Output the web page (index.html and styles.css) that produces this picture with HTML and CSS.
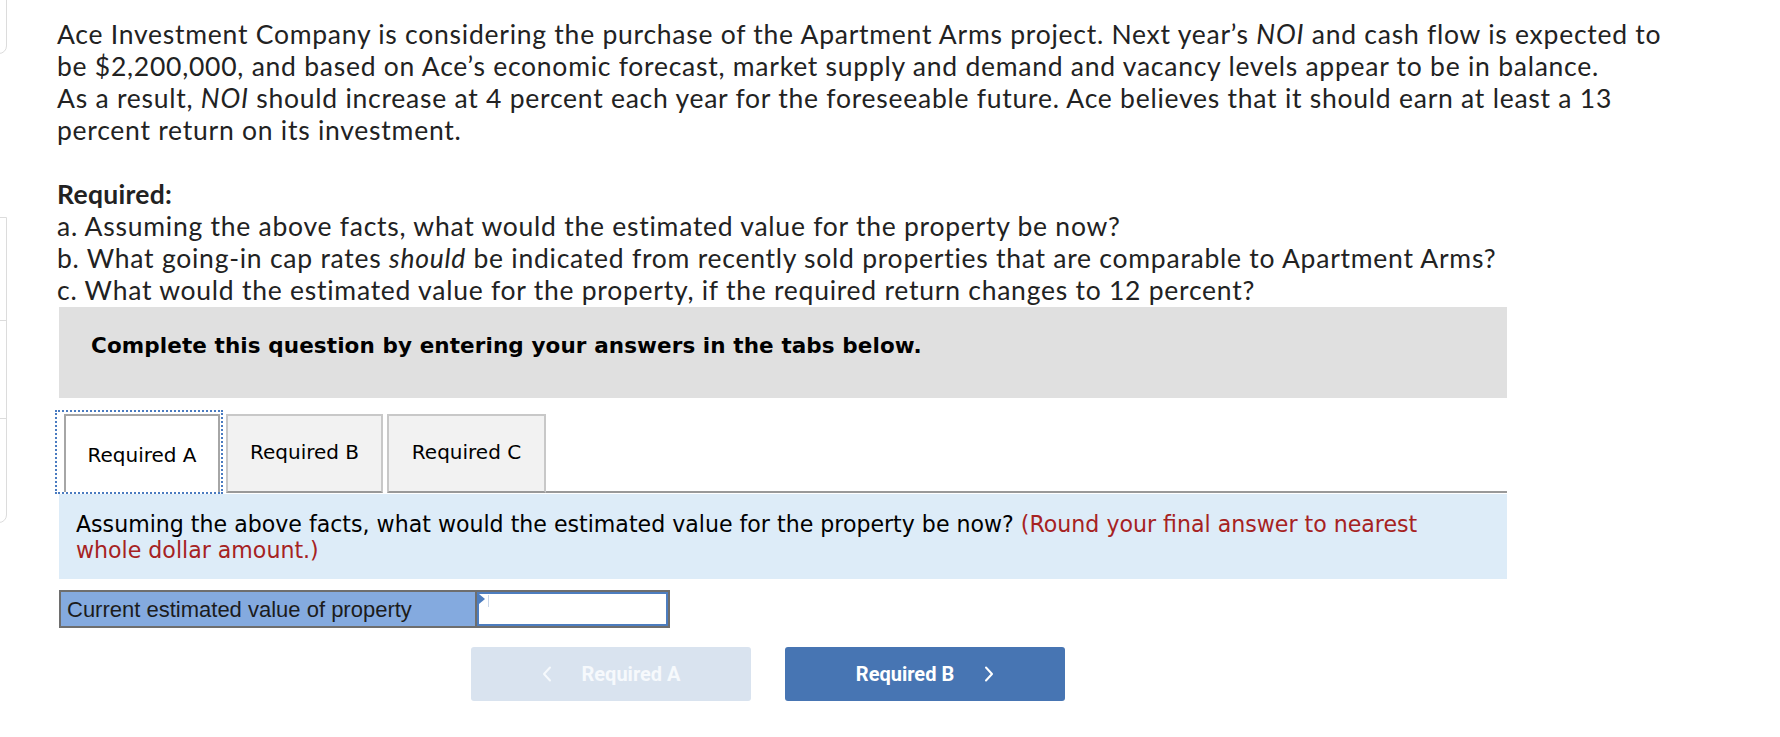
FILE: index.html
```html
<!DOCTYPE html>
<html lang="en">
<head>
<meta charset="utf-8">
<title>Apartment Arms</title>
<link rel="stylesheet" href="styles.css">
</head>
<body>
<div class="page">
  <aside class="side">
    <div class="card card-top"></div>
    <div class="card-group">
      <div class="seg seg-1"></div>
      <div class="seg seg-2"></div>
      <div class="seg seg-3"></div>
    </div>
  </aside>
  <main class="main">
    <p class="intro">Ace Investment Company is considering the purchase of the Apartment Arms project. Next year’s <i>NOI</i> and cash flow is expected to<br>be $2,200,000, and based on Ace’s economic forecast, market supply and demand and vacancy levels appear to be in balance.<br>As a result, <i>NOI</i> should increase at 4 percent each year for the foreseeable future. Ace believes that it should earn at least a 13<br>percent return on its investment.</p>
    <p class="req"><strong>Required:</strong><br>a. Assuming the above facts, what would the estimated value for the property be now?<br>b. What going-in cap rates <i>should</i> be indicated from recently sold properties that are comparable to Apartment Arms?<br>c. What would the estimated value for the property, if the required return changes to 12 percent?</p>

    <div class="instr">Complete this question by entering your answers in the tabs below.</div>

    <div class="tabs">
      <div class="tab-focus"><div class="tab tab-active">Required A</div></div>
      <div class="tab">Required B</div>
      <div class="tab tab-c">Required C</div>
      <div class="tab-fill"></div>
    </div>

    <div class="prompt">Assuming the above facts, what would the estimated value for the property be now? <span class="hint">(Round your final answer to nearest<br>whole dollar amount.)</span></div>

    <div class="answer">
      <div class="answer-label">Current estimated value of property</div>
      <div class="answer-input"><span class="marker"></span><span class="caret"></span></div>
    </div>

    <div class="nav">
      <div class="btn btn-prev">
        <svg class="chev" viewBox="0 0 10 16" width="10" height="16"><path d="M8 1.5 L2 8 L8 14.5" fill="none" stroke="currentColor" stroke-width="2" stroke-linecap="round" stroke-linejoin="round"/></svg>
        <span>Required A</span>
      </div>
      <div class="btn btn-next">
        <span>Required B</span>
        <svg class="chev" viewBox="0 0 10 16" width="10" height="16"><path d="M2 1.5 L8 8 L2 14.5" fill="none" stroke="currentColor" stroke-width="2" stroke-linecap="round" stroke-linejoin="round"/></svg>
      </div>
    </div>
  </main>
</div>
</body>
</html>
```

FILE: styles.css
```css
html, body {
  margin: 0;
  padding: 0;
  background: #ffffff;
}

body {
  font-family: Lato, "Open Sans", sans-serif;
  color: #222222;
}

.page {
  display: flex;
  align-items: flex-start;
  width: 1780px;
  height: 737px;
  overflow: hidden;
}

/* cut-off sidebar cards on the left edge */
.side {
  flex: none;
  width: 8px;
  overflow: hidden;
}

.card,
.card-group {
  width: 107px;
  margin-left: -100px;
  box-sizing: border-box;
  border: 1px solid #dcdcdc;
}

.card-top {
  margin-top: -10px;
  height: 64px;
  border-radius: 0 0 8px 0;
}

.card-group {
  margin-top: 163px;
  border-radius: 0 0 8px 0;
}

.seg + .seg {
  border-top: 1px solid #dcdcdc;
}

.seg-1 { height: 102px; }
.seg-2 { height: 97px; }
.seg-3 { height: 103px; }

.main {
  flex: 1;
  padding: 18px 0 0 49px;
}

.intro,
.req {
  margin: 0;
  font-family: Lato, "Open Sans", sans-serif;
  font-size: 26.5px;
  line-height: 32px;
  letter-spacing: 0.75px;
  white-space: nowrap;
  color: #222222;
}

.req {
  margin-top: 32px;
}

.req strong {
  font-weight: 700;
  letter-spacing: 0.3px;
}

.instr {
  margin: 1px 0 0 2px;
  width: 1448px;
  height: 91px;
  box-sizing: border-box;
  padding: 27px 32px 0;
  background: #e0e0e0;
  font-family: "DejaVu Sans", Verdana, sans-serif;
  font-weight: 700;
  font-size: 21.5px;
  line-height: 24px;
  letter-spacing: 0.1px;
  white-space: nowrap;
  color: #000000;
}

.tabs {
  display: flex;
  align-items: flex-start;
  margin: 12px 0 0 -2px;
  width: 1452px;
  height: 84px;
  font-family: "DejaVu Sans", Verdana, sans-serif;
  font-size: 20px;
  color: #000000;
}

.tab-focus {
  flex: none;
  width: 168px;
  height: 84px;
  box-sizing: border-box;
  border: 2px dotted #4a7bc0;
  padding: 2px 1px 0 7px;
}

.tab {
  flex: none;
  width: 157px;
  height: 79px;
  box-sizing: border-box;
  margin: 4px 0 0 3px;
  display: flex;
  align-items: center;
  justify-content: center;
  background: #f2f2f2;
  border: 2px solid #c8c8c8;
  border-bottom: 2px solid #999999;
  padding-bottom: 3px;
}

.tab-c {
  margin-left: 4px;
  width: 159px;
}

.tab.tab-active {
  margin: 0;
  width: 156px;
  height: 78px;
  background: #ffffff;
  border: 2px solid #a6a6a6;
  border-bottom: none;
  padding-bottom: 0;
  padding-top: 2px;
}

.tab-fill {
  flex: 1;
  height: 79px;
  margin-top: 4px;
  box-sizing: border-box;
  border-bottom: 2px solid #999999;
}

.prompt {
  margin: 0 0 0 2px;
  width: 1448px;
  height: 85px;
  box-sizing: border-box;
  padding: 17px 17px 0;
  background: #ddecf8;
  font-family: "DejaVu Sans", Verdana, sans-serif;
  font-size: 22.1px;
  line-height: 26px;
  white-space: nowrap;
  color: #000000;
}

.hint {
  color: #a62222;
}

.answer {
  display: flex;
  margin: 11px 0 0 2px;
  width: 611px;
  height: 38px;
  box-sizing: border-box;
  border: 2px solid #6e6e6e;
  background: #6e6e6e;
  gap: 2px;
}

.answer-label {
  flex: none;
  width: 414px;
  box-sizing: border-box;
  padding: 1px 0 0 6px;
  background: #84aadf;
  display: flex;
  align-items: center;
  font-family: "Liberation Sans", Arial, sans-serif;
  font-size: 22px;
  white-space: nowrap;
  color: #1c1c1c;
}

.answer-input {
  position: relative;
  flex: 1;
  box-sizing: border-box;
  border: 2px solid #4d7dbf;
  background: #ffffff;
}

.marker {
  position: absolute;
  left: 0;
  top: 0;
  width: 0;
  height: 0;
  border-top: 5px solid transparent;
  border-bottom: 5px solid transparent;
  border-left: 6px solid #4d7dbf;
}

.caret {
  position: absolute;
  left: 9px;
  top: 1px;
  width: 1px;
  height: 12px;
  background: #c9d6e8;
}

.nav {
  display: flex;
  gap: 34px;
  margin-top: 19px;
  padding-left: 414px;
}

.btn {
  flex: none;
  width: 280px;
  height: 54px;
  border-radius: 3px;
  display: flex;
  align-items: center;
  justify-content: center;
  gap: 30px;
  font-family: Roboto, "Liberation Sans", sans-serif;
  font-weight: 700;
  font-size: 20px;
  color: #ffffff;
}

.btn-prev {
  background: #d9e3ef;
  color: #f6f9fc;
}

.btn-next {
  background: #4775b3;
}

.chev {
  display: block;
}
```
